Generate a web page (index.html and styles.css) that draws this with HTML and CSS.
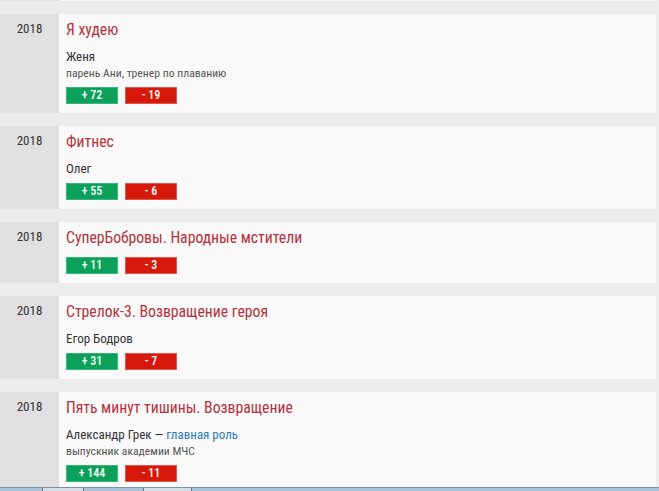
FILE: index.html
```html
<!DOCTYPE html>
<html lang="ru">
<head>
<meta charset="utf-8">
<title>Роли</title>
<link rel="stylesheet" href="styles.css">
</head>
<body>
<div class="list">
  <div class="card card-stub"><div class="year"></div><div class="body"></div></div>

  <div class="card">
    <div class="year">2018</div>
    <div class="body">
      <div class="title">Я худею</div>
      <div class="name">Женя</div>
      <div class="sub">парень Ани, тренер по плаванию</div>
      <div class="votes"><span class="vote plus">+ 72</span><span class="vote minus">- 19</span></div>
    </div>
  </div>

  <div class="card">
    <div class="year">2018</div>
    <div class="body">
      <div class="title">Фитнес</div>
      <div class="name">Олег</div>
      <div class="votes"><span class="vote plus">+ 55</span><span class="vote minus">- 6</span></div>
    </div>
  </div>

  <div class="card">
    <div class="year">2018</div>
    <div class="body">
      <div class="title">СуперБобровы. Народные мстители</div>
      <div class="votes"><span class="vote plus">+ 11</span><span class="vote minus">- 3</span></div>
    </div>
  </div>

  <div class="card">
    <div class="year">2018</div>
    <div class="body">
      <div class="title">Стрелок-3. Возвращение героя</div>
      <div class="name">Егор Бодров</div>
      <div class="votes"><span class="vote plus">+ 31</span><span class="vote minus">- 7</span></div>
    </div>
  </div>

  <div class="card">
    <div class="year">2018</div>
    <div class="body">
      <div class="title">Пять минут тишины. Возвращение</div>
      <div class="name">Александр Грек — <a class="role" href="#">главная роль</a></div>
      <div class="sub">выпускник академии МЧС</div>
      <div class="votes"><span class="vote plus">+ 144</span><span class="vote minus">- 11</span></div>
    </div>
  </div>
</div>
<div class="taskbar"><span class="tb-btn tb-1"></span><span class="tb-btn tb-2"></span></div>
</body>
</html>
```
FILE: styles.css
```css
html, body {
  margin: 0;
  padding: 0;
  background: #ececec;
  font-family: Roboto, "Noto Sans", sans-serif;
  font-stretch: 87.5%;
  overflow: hidden;
}

.list {
  display: flex;
  flex-direction: column;
  gap: 13px;
  padding-right: 3px;
}

.card {
  display: grid;
  grid-template-columns: 59px 1fr;
  background: #f9f9f9;
}

.card-stub {
  height: 1px;
}

.year {
  background: #e0e0e0;
  text-align: center;
  font-size: 13px;
  line-height: 16px;
  color: #333;
  padding-top: 7px;
}

.card-stub .year { padding: 0; }

.body {
  padding: 6px 7px 9px;
}

.card-stub .body { padding: 0; }

.title {
  font-size: 15.7px;
  line-height: 20px;
  color: #b3323d;
  margin-bottom: 9px;
}

.name {
  font-size: 13px;
  line-height: 16px;
  color: #333;
}

.sub {
  font-size: 11.7px;
  line-height: 16px;
  color: #555;
}

.role {
  color: #2b7bc0;
  text-decoration: none;
}

.votes {
  display: flex;
  gap: 7px;
  margin-top: 6px;
}

.title + .votes { margin-top: 0; }

.vote {
  box-sizing: border-box;
  width: 52px;
  height: 17px;
  line-height: 15px;
  text-align: center;
  color: #fff;
  font-size: 12px;
  font-weight: 500;
}

.plus {
  background: #0ba15a;
  border: 1px solid #3ab57a;
}

.minus {
  background: #d7190b;
  border: 1px solid #e2574d;
}

.taskbar {
  position: fixed;
  left: 0;
  right: 0;
  bottom: 0;
  height: 3px;
  background: #a9c1d9;
  border-top: 1px solid #7d93aa;
}

.tb-btn {
  position: absolute;
  top: 0;
  height: 3px;
  background: #d6dde4;
  border-left: 1px solid #6d7884;
  border-right: 1px solid #6d7884;
}

.tb-1 { left: 42px; width: 40px; }
.tb-2 { left: 143px; width: 47px; }
```
